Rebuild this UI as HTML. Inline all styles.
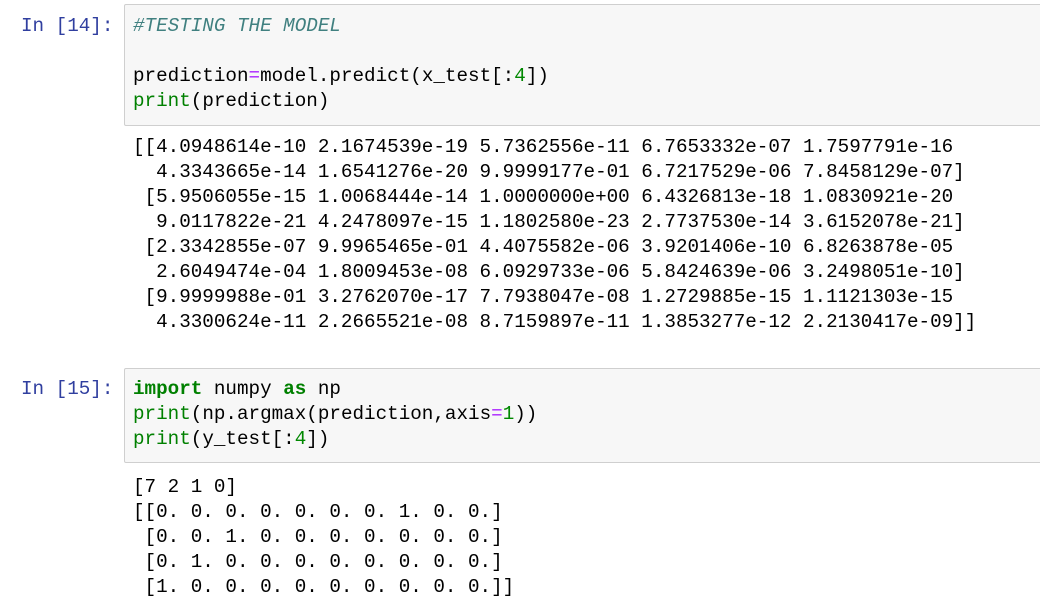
<!DOCTYPE html>
<html><head><meta charset="utf-8"><style>
html,body{margin:0;padding:0;background:#fff;width:1040px;height:603px;overflow:hidden;position:relative}
.l{position:absolute;left:133px;font-family:"Liberation Mono","DejaVu Sans Mono",monospace;font-size:19.25px;line-height:25px;white-space:pre;color:#000}
.p{position:absolute;font-family:"Liberation Mono",monospace;font-size:19.25px;line-height:25px;color:#303f9f;white-space:pre}
.box{position:absolute;left:124px;width:930px;background:#f7f7f7;border:1px solid #cfcfcf;border-radius:2px}
.c{color:#408080;font-style:italic}.k{color:#008000;font-weight:bold}.b{color:#008000}.o{color:#aa22ff}.n{color:#080}
</style></head><body>
<div class="box" style="top:4px;height:120px"></div>
<div class="box" style="top:368px;height:93px"></div>
<div class="p" style="left:21px;top:14px">In [14]:</div>
<div class="l" style="top:14px"><span class="c">#TESTING THE MODEL</span></div>
<div class="l" style="top:64px">prediction<span class="o">=</span>model.predict(x_test[:<span class="n">4</span>])</div>
<div class="l" style="top:89px"><span class="b">print</span>(prediction)</div>
<div class="l" style="top:135px">[[4.0948614e-10 2.1674539e-19 5.7362556e-11 6.7653332e-07 1.7597791e-16</div>
<div class="l" style="top:160px">  4.3343665e-14 1.6541276e-20 9.9999177e-01 6.7217529e-06 7.8458129e-07]</div>
<div class="l" style="top:185px"> [5.9506055e-15 1.0068444e-14 1.0000000e+00 6.4326813e-18 1.0830921e-20</div>
<div class="l" style="top:210px">  9.0117822e-21 4.2478097e-15 1.1802580e-23 2.7737530e-14 3.6152078e-21]</div>
<div class="l" style="top:235px"> [2.3342855e-07 9.9965465e-01 4.4075582e-06 3.9201406e-10 6.8263878e-05</div>
<div class="l" style="top:260px">  2.6049474e-04 1.8009453e-08 6.0929733e-06 5.8424639e-06 3.2498051e-10]</div>
<div class="l" style="top:285px"> [9.9999988e-01 3.2762070e-17 7.7938047e-08 1.2729885e-15 1.1121303e-15</div>
<div class="l" style="top:310px">  4.3300624e-11 2.2665521e-08 8.7159897e-11 1.3853277e-12 2.2130417e-09]]</div>
<div class="p" style="left:21px;top:377px">In [15]:</div>
<div class="l" style="top:377px"><span class="k">import</span> numpy <span class="k">as</span> np</div>
<div class="l" style="top:402px"><span class="b">print</span>(np.argmax(prediction,axis<span class="o">=</span><span class="n">1</span>))</div>
<div class="l" style="top:427px"><span class="b">print</span>(y_test[:<span class="n">4</span>])</div>
<div class="l" style="top:475px">[7 2 1 0]</div>
<div class="l" style="top:500px">[[0. 0. 0. 0. 0. 0. 0. 1. 0. 0.]</div>
<div class="l" style="top:525px"> [0. 0. 1. 0. 0. 0. 0. 0. 0. 0.]</div>
<div class="l" style="top:550px"> [0. 1. 0. 0. 0. 0. 0. 0. 0. 0.]</div>
<div class="l" style="top:575px"> [1. 0. 0. 0. 0. 0. 0. 0. 0. 0.]]</div>
</body></html>
